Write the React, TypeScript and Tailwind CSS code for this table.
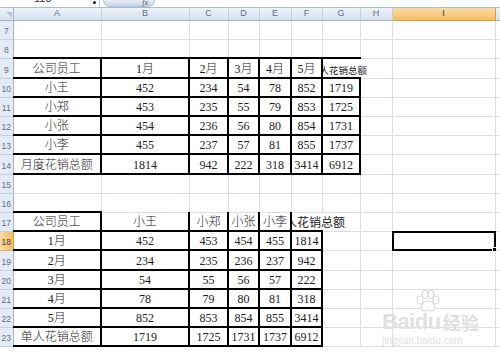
import React from "react";

type Cell = string | number | null;

const colLetters = ["A", "B", "C", "D", "E", "F", "G", "H", "I", "J"];
const colWidths = [13, 88, 88, 39, 31, 32, 31, 38, 32, 103, 80];

// rows 7..23, heights tuned so the grid lines land where the screenshot has them
const rowNums = [7, 8, 9, 10, 11, 12, 13, 14, 15, 16, 17, 18, 19, 20, 21, 22, 23];
const tallRows = [9, 14, 19];

const sheet: Record<number, Cell[]> = {
  9: ["公司员工", "1月", "2月", "3月", "4月", "5月", null],
  10: ["小王", 452, 234, 54, 78, 852, 1719],
  11: ["小郑", 453, 235, 55, 79, 853, 1725],
  12: ["小张", 454, 236, 56, 80, 854, 1731],
  13: ["小李", 455, 237, 57, 81, 855, 1737],
  14: ["月度花销总额", 1814, 942, 222, 318, 3414, 6912],
  17: ["公司员工", "小王", "小郑", "小张", "小李", null],
  18: ["1月", 452, 453, 454, 455, 1814],
  19: ["2月", 234, 235, 236, 237, 942],
  20: ["3月", 54, 55, 56, 57, 222],
  21: ["4月", 78, 79, 80, 81, 318],
  22: ["5月", 852, 853, 854, 855, 3414],
  23: ["单人花销总额", 1719, 1725, 1731, 1737, 6912],
};

// col index: 1 = A ... 10 = J
const borderClass = (row: number, col: number) => {
  const grid = "border border-[#dadfe7]";
  // first table: rows 9-14, columns A-G
  if (row >= 9 && row <= 14 && col >= 1 && col <= 7) {
    if (row === 9 && col === 7)
      return "border-t-2 border-t-black border-b-2 border-b-black border-l-2 border-l-black border-r border-r-transparent";
    if (col === 1)
      return "border-t-2 border-t-black border-b-2 border-b-black border-r-2 border-r-black border-l border-l-[#dadfe7]";
    return "border-2 border-black";
  }
  // second table: rows 17-23, columns A-F
  if (row >= 17 && row <= 23 && col >= 1 && col <= 6) {
    if (row === 17) {
      if (col === 1)
        return "border-t-2 border-t-black border-b-2 border-b-black border-r-2 border-r-black border-l border-l-[#dadfe7]";
      if (col === 6)
        return "border-t border-t-[#dadfe7] border-b-2 border-b-black border-l-2 border-l-black border-r border-r-transparent";
      return "border-t border-t-[#dadfe7] border-b-2 border-b-black border-x-2 border-x-black";
    }
    if (col === 1)
      return "border-t-2 border-t-black border-b-2 border-b-black border-r-2 border-r-black border-l border-l-[#dadfe7]";
    return "border-2 border-black";
  }
  return grid;
};

const Overflow = ({ text, size }: { text: string; size: "sm" | "md" }) => (
  <div className="absolute inset-y-0 left-0 w-[70px] overflow-hidden">
    {size === "sm" ? (
      <span className="absolute bottom-[1px] left-[-13px] whitespace-nowrap text-[9.5px] font-normal leading-[12px] text-[#222] [font-family:'Noto_Sans_CJK_SC',sans-serif]">
        {text}
      </span>
    ) : (
      <span className="absolute bottom-[1px] left-[-19px] whitespace-nowrap text-[12px] font-normal leading-[14px] text-[#222] [font-family:'Noto_Sans_CJK_SC',sans-serif]">
        {text}
      </span>
    )}
  </div>
);

const BaiduMark = () => (
  <div className="pointer-events-none absolute left-[382px] top-[290px] flex flex-col text-[#e0e0e0]">
    <div className="flex items-end">
      <span className="text-[22px] font-bold leading-[24px] tracking-[-0.5px] [font-family:'Liberation_Sans',sans-serif]">
        Bai
      </span>
      <div className="relative flex flex-col items-center">
        <svg width="26" height="22" viewBox="0 0 26 22" className="-mb-[2px]">
          <g fill="#ffffff" stroke="#dcdcdc" strokeWidth="1.2">
            <ellipse cx="5" cy="10" rx="3" ry="4" />
            <ellipse cx="10" cy="4.5" rx="3" ry="4" />
            <ellipse cx="16" cy="4.5" rx="3" ry="4" />
            <ellipse cx="21" cy="10" rx="3" ry="4" />
            <path d="M13 11 C8 11 5 17 7 20 C9 22 11 20 13 20 C15 20 17 22 19 20 C21 17 18 11 13 11 Z" />
          </g>
        </svg>
        <span className="text-[22px] font-bold leading-[24px] tracking-[-0.5px] [font-family:'Liberation_Sans',sans-serif]">
          du
        </span>
      </div>
      <span className="ml-[2px] text-[18px] font-bold leading-[24px] [font-family:'Noto_Sans_CJK_SC',sans-serif]">
        经验
      </span>
    </div>
    <span className="mt-[1px] text-[10px] leading-[12px] [font-family:'Liberation_Sans',sans-serif]">
      jingyan.baidu.com
    </span>
  </div>
);

export default function App() {
  return (
    <div className="relative h-[355px] w-[500px] overflow-hidden bg-white">
      {/* formula bar strip */}
      <div className="flex h-[8px] border-b border-[#a9bdd6] bg-white">
        <div className="relative w-[100px] overflow-hidden border-r border-[#c5d2e3]">
          <span className="absolute left-[34px] top-[-8px] text-[11px] leading-[12px] text-[#333] [font-family:'Liberation_Sans',sans-serif]">
            118
          </span>
          <span className="absolute right-[3px] top-[1px] h-[3px] w-[3px] rounded-full bg-[#222]" />
        </div>
        <div className="ml-[3px] flex h-[7px] w-[52px] items-end justify-end rounded-b-[8px] border border-t-0 border-[#b4c3d7] bg-gradient-to-b from-[#e8eef6] to-[#c9d6e7] pr-[6px]">
          <span className="text-[8px] italic leading-[7px] text-[#555] [font-family:'Liberation_Serif',serif]">
            fx
          </span>
        </div>
        <div className="flex-1" />
      </div>

      <table className="w-[575px] table-fixed border-collapse font-light [font-family:'Liberation_Serif','Noto_Sans_CJK_SC',serif]">
        <colgroup>
          {colWidths.map((w, i) => (
            <col key={i} style={{ width: w }} />
          ))}
        </colgroup>
        <thead>
          <tr className="h-[12px]">
            <th className="border-r border-b border-[#9fb4cf] bg-gradient-to-b from-[#eef3fa] to-[#d6e0ee] p-0">
              <div className="ml-auto mr-[1px] mt-[3px] h-0 w-0 border-l-[6px] border-t-[6px] border-l-transparent border-t-[#b7c6da]" />
            </th>
            {colLetters.map((c) =>
              c === "I" ? (
                <th
                  key={c}
                  className="border-x border-b border-[#d99a44] bg-gradient-to-b from-[#fbdca3] to-[#f3bd60] p-0 text-center text-[9px] font-normal leading-[11px] text-[#3d3d3d] [font-family:'Liberation_Sans',sans-serif]"
                >
                  {c}
                </th>
              ) : (
                <th
                  key={c}
                  className="border-x border-b border-x-[#c3d0e2] border-b-[#9fb4cf] bg-gradient-to-b from-[#eef3fa] to-[#d6e0ee] p-0 text-center text-[9px] font-normal leading-[11px] text-[#5d6e86] [font-family:'Liberation_Sans',sans-serif]"
                >
                  {c}
                </th>
              )
            )}
          </tr>
        </thead>
        <tbody>
          {rowNums.map((r) => {
            const data = sheet[r] || [];
            return (
              <tr key={r} className={tallRows.includes(r) ? "h-[20px]" : "h-[19px]"}>
                {r === 18 ? (
                  <td className="border-r border-b border-r-[#d99a44] border-b-[#e0b06a] bg-gradient-to-r from-[#fbdca3] to-[#f3bd60] p-0 text-center align-bottom text-[8.5px] font-normal leading-[15px] text-[#3d3d3d] [font-family:'Liberation_Sans',sans-serif]">
                    {r}
                  </td>
                ) : (
                  <td className="border-r border-b border-r-[#9fb4cf] border-b-[#c3d0e2] bg-[#e4ebf5] p-0 text-center align-bottom text-[8.5px] font-normal leading-[15px] text-[#5d6e86] [font-family:'Liberation_Sans',sans-serif]">
                    {r}
                  </td>
                )}
                {colLetters.map((c, i) => {
                  const col = i + 1;
                  const v = data[i];
                  const isOverflow1 = r === 9 && col === 7;
                  const isOverflow2 = r === 17 && col === 6;
                  const isSelected = r === 18 && c === "I";
                  return (
                    <td
                      key={c}
                      className={`relative p-0 text-center align-bottom text-[12px] leading-[15px] text-[#222] ${borderClass(r, col)}`}
                    >
                      {v !== null && v !== undefined ? <span className="whitespace-nowrap">{v}</span> : null}
                      {isOverflow1 && <Overflow text="个人花销总额" size="sm" />}
                      {isOverflow2 && <Overflow text="个人花销总额" size="md" />}
                      {isSelected && (
                        <div className="absolute -inset-[1px] border-2 border-black">
                          <div className="absolute -bottom-[3px] -right-[3px] h-[5px] w-[5px] border border-white bg-black" />
                        </div>
                      )}
                    </td>
                  );
                })}
              </tr>
            );
          })}
        </tbody>
      </table>

      <BaiduMark />
    </div>
  );
}
